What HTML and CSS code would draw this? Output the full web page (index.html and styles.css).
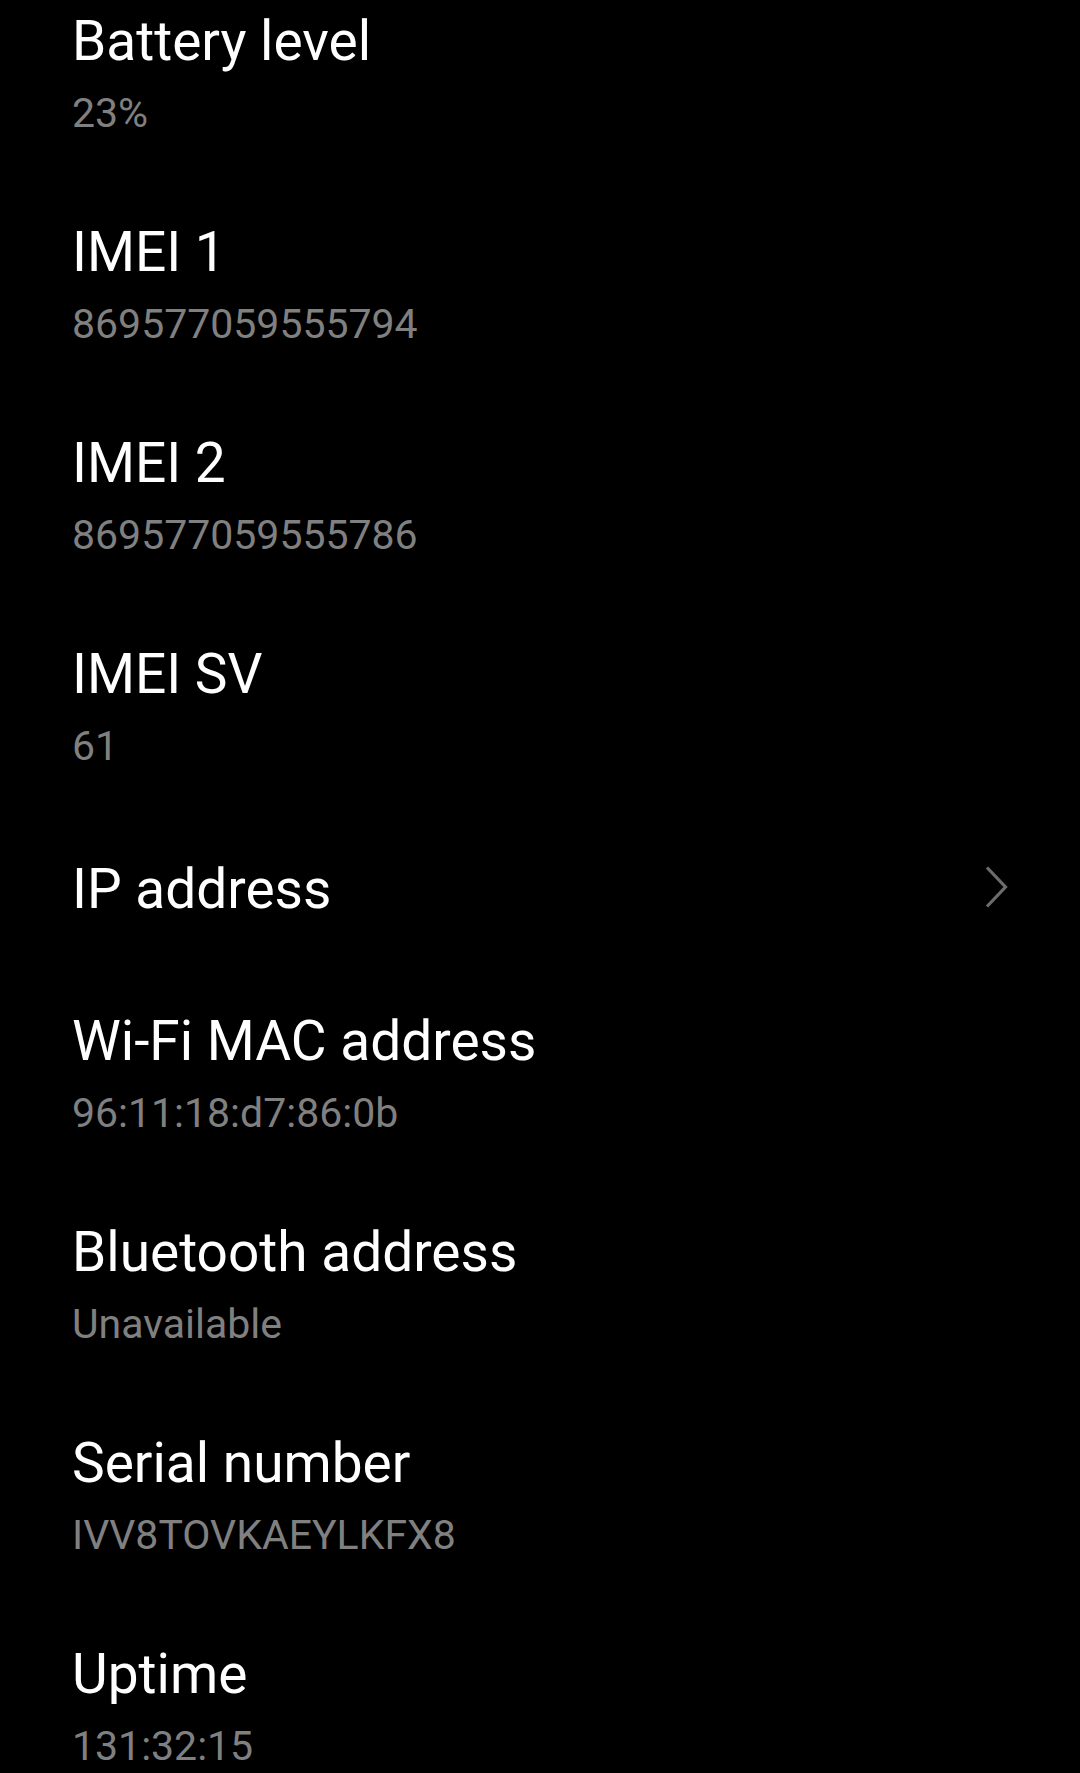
FILE: index.html
```html
<!DOCTYPE html>
<html>
<head>
<meta charset="utf-8">
<link rel="stylesheet" href="styles.css">
</head>
<body>
<div class="list">
  <div class="item">
    <div class="title">Battery level</div>
    <div class="sub">23%</div>
  </div>
  <div class="item">
    <div class="title">IMEI 1</div>
    <div class="sub">869577059555794</div>
  </div>
  <div class="item">
    <div class="title">IMEI 2</div>
    <div class="sub">869577059555786</div>
  </div>
  <div class="item">
    <div class="title">IMEI SV</div>
    <div class="sub">61</div>
  </div>
  <div class="item item-link">
    <div class="title">IP address</div>
    <svg class="chevron" width="24" height="42" viewBox="0 0 24 42"><path d="M3 1.5 L21.5 21 L3 40.5" fill="none" stroke="#6c6c6c" stroke-width="3.2"/></svg>
  </div>
  <div class="item">
    <div class="title">Wi-Fi MAC address</div>
    <div class="sub">96:11:18:d7:86:0b</div>
  </div>
  <div class="item">
    <div class="title">Bluetooth address</div>
    <div class="sub">Unavailable</div>
  </div>
  <div class="item">
    <div class="title">Serial number</div>
    <div class="sub">IVV8TOVKAEYLKFX8</div>
  </div>
  <div class="item">
    <div class="title">Uptime</div>
    <div class="sub">131:32:15</div>
  </div>
</div>
</body>
</html>
```
FILE: styles.css
```css
html, body {
  margin: 0;
  padding: 0;
  background: #000;
  height: 100%;
  overflow: hidden;
}
body {
  font-family: Roboto, "Noto Sans", "Liberation Sans", sans-serif;
  -webkit-font-smoothing: antialiased;
}
.list {
  margin-top: -33px;
  display: flex;
  flex-direction: column;
}
.item {
  padding: 40px 72px 27px 72px;
  display: flex;
  flex-direction: column;
}
.item-link {
  padding: 44px 72px 44px 72px;
  flex-direction: row;
  align-items: center;
  justify-content: space-between;
}
.title {
  color: #ffffff;
  font-size: 55px;
  line-height: 68px;
  white-space: nowrap;
}
.sub {
  color: #808080;
  font-size: 41px;
  line-height: 76px;
  white-space: nowrap;
}
.chevron {
  display: block;
  margin-top: -5px;
}
```
